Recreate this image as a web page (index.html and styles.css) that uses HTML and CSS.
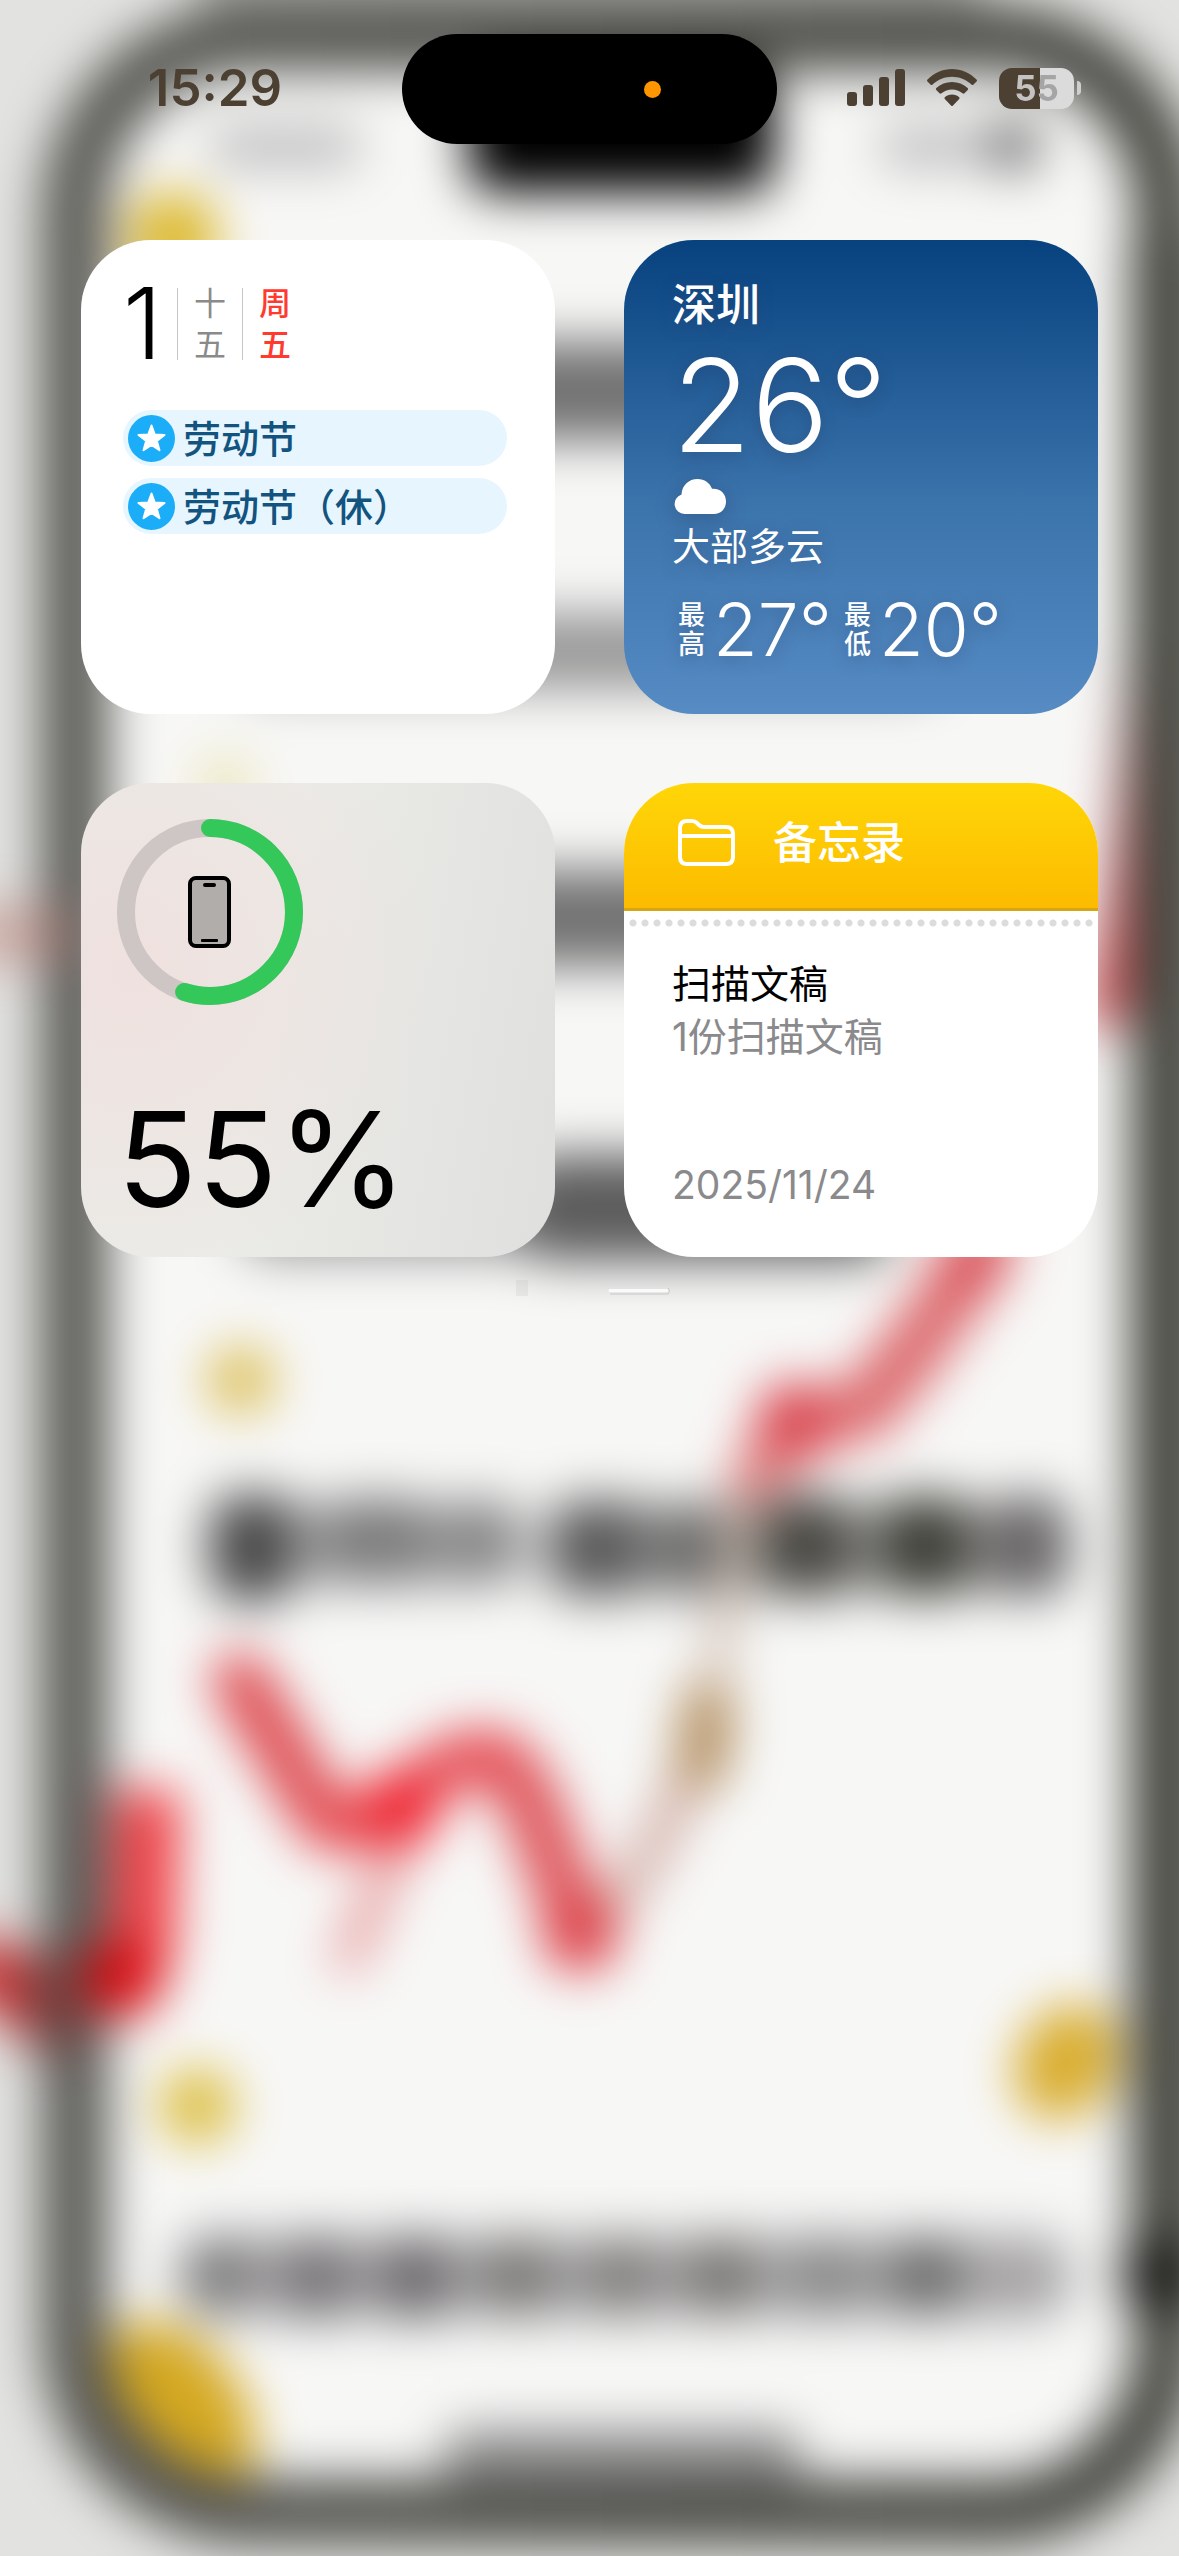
FILE: index.html
```
<!DOCTYPE html>
<html lang="zh-CN">
<head>
	<meta charset="UTF-8" />
	<meta name="viewport" content="width=device-width, initial-scale=1.0" />
	<title>小组件</title>
	<link rel="stylesheet" href="styles.css">
</head>
<body>
<svg class="wallpaper" viewBox="0 0 1179 2556" preserveAspectRatio="none" aria-hidden="true">
	<defs>
		<filter id="soft" x="-200" y="-200" width="1579" height="2956" filterUnits="userSpaceOnUse" color-interpolation-filters="sRGB">
			<feGaussianBlur stdDeviation="25"/>
		</filter>
		<linearGradient id="frame" x1="0" x2="1" y1="0" y2="0">
			<stop offset="0" stop-color="#585854"/>
			<stop offset="0.9" stop-color="#4a4a46"/>
			<stop offset="1" stop-color="#484942"/>
		</linearGradient>
	</defs>
	<g filter="url(#soft)">
		<rect x="-100" y="-100" width="1379" height="2756" fill="#e2e2e0"/>
		<rect x="200" y="-100" width="780" height="140" fill="#a4a4a1"/>
		<rect x="75" y="40" width="1090" height="2472" rx="175" fill="#f7f7f6"/>
		<!-- coins -->
		<circle cx="173" cy="238" r="46" fill="#dcb82c"/>
		<circle cx="225" cy="785" r="30" fill="#ece6bb"/>
		<circle cx="241" cy="1380" r="34" fill="#dcc05a"/>
		<circle cx="197" cy="2106" r="38" fill="#dcbe40"/>
		<ellipse cx="1066" cy="2062" rx="48" ry="60" fill="#d8ac2c" transform="rotate(30 1066 2062)"/>
		<ellipse cx="178" cy="2410" rx="64" ry="98" fill="#d4a820" transform="rotate(-35 178 2410)"/>
		<!-- captions -->
		<g fill="#6e6e6e">
			<rect x="240" y="342" width="730" height="98" rx="30" fill="#727272"/>
			<rect x="240" y="613" width="700" height="76" rx="30" fill="#989898"/>
			<rect x="240" y="870" width="700" height="96" rx="30" fill="#727272"/>
			<rect x="240" y="1170" width="300" height="84" rx="30" fill="#909090"/>
			<rect x="520" y="1155" width="370" height="106" rx="30" fill="#5c5c5c"/>
			<rect x="205" y="1502" width="320" height="84" rx="30" fill="#a4a4a4"/>
			<rect x="545" y="1502" width="525" height="92" rx="30" fill="#9a9a98"/>
			<rect x="212" y="1494" width="80" height="108" rx="26" fill="#484848"/>
			<rect x="322" y="1498" width="110" height="82" rx="30" fill="#7c7c7c"/>
			<rect x="446" y="1500" width="72" height="80" rx="26" fill="#868686"/>
			<rect x="550" y="1500" width="92" height="96" rx="26" fill="#5a5a5a"/>
			<rect x="658" y="1506" width="66" height="88" rx="26" fill="#6a6a6a"/>
			<rect x="762" y="1496" width="90" height="100" rx="26" fill="#484742"/>
			<rect x="880" y="1496" width="90" height="100" rx="26" fill="#40403a"/>
			<rect x="990" y="1496" width="78" height="100" rx="26" fill="#666465"/>
			<rect x="180" y="2236" width="890" height="82" rx="30" fill="#a6a4a5"/>
			<rect x="185" y="2238" width="66" height="74" rx="26" fill="#7c7b7c"/>
			<rect x="284" y="2236" width="66" height="84" rx="26" fill="#747275"/>
			<rect x="382" y="2236" width="66" height="84" rx="26" fill="#6a686b"/>
			<rect x="482" y="2238" width="70" height="76" rx="26" fill="#787876"/>
			<rect x="588" y="2238" width="66" height="76" rx="26" fill="#7e7e7c"/>
			<rect x="688" y="2238" width="66" height="76" rx="26" fill="#747471"/>
			<rect x="794" y="2238" width="66" height="76" rx="26" fill="#888"/>
			<rect x="892" y="2238" width="66" height="76" rx="26" fill="#6a6a6a"/>
			<rect x="210" y="126" width="150" height="40" rx="17" fill="#bbb"/>
			<rect x="880" y="126" width="100" height="40" rx="17" fill="#bbb"/>
			<rect x="985" y="120" width="55" height="50" rx="17" fill="#747474"/>
			<rect x="445" y="2430" width="355" height="60" rx="20" fill="#8c8c8c"/>
		</g>
		<!-- chart line -->
		<g fill="none" stroke-linecap="round" stroke-linejoin="round">
			<path d="M240 1680 320 1812" stroke="#dc4248" stroke-width="54"/>
			<path d="M348 1960 400 1840" stroke="#e48a8c" stroke-width="26"/>
			<path d="M330 1825 400 1815" stroke="#e4464c" stroke-width="54"/>
			<path d="M582 1935Q650 1880 700 1745" stroke="#cda39a" stroke-width="30"/>
			<path d="M500 1760Q530 1790 545 1840L580 1930" stroke="#dc4a50" stroke-width="56"/>
			<path d="M400 1815Q445 1745 500 1758" stroke="#e4444c" stroke-width="52"/>
			<circle cx="400" cy="1808" r="38" fill="#f01c2a"/>
			<circle cx="580" cy="1934" r="38" fill="#dc3c44"/>
			<path d="M702 1765 708 1705" stroke="#b08a5a" stroke-width="50"/>
			<path d="M718 1660 745 1490" stroke="#c9b4a6" stroke-width="24"/>
			<path d="M755 1478 800 1420 870 1410" stroke="#dd7a7a" stroke-width="50"/>
			<path d="M860 1412Q920 1350 985 1240" stroke="#db6468" stroke-width="60"/>
			<circle cx="796" cy="1422" r="40" fill="#d8404a"/>
			<circle cx="972" cy="1262" r="34" fill="#d84c54"/>
			<path d="M1105 1010Q1135 900 1150 640" stroke="#cc4a50" stroke-width="40"/>
		</g>
		<rect x="75" y="38" width="1092" height="2473" rx="175" fill="none" stroke="url(#frame)" stroke-width="66"/>
		<rect x="1130" y="240" width="80" height="2070" fill="#484942"/>
		<circle cx="1158" cy="2275" r="38" fill="#181816"/>
		<path d="M-40 1960 0 1975 56 2030" fill="none" stroke="#c42c2e" stroke-width="60"/>
		<path d="M60 2050V1950" fill="none" stroke="#6a4442" stroke-width="60"/>
		<path d="M120 1985Q147 1970 144 1900L148 1790" fill="none" stroke="#ee3c42" stroke-width="64"/>
		<circle cx="122" cy="1980" r="38" fill="#d8080e"/>
		<path d="M-40 934H75" fill="none" stroke="#b87c72" stroke-width="56" opacity="0.55"/>
		<rect x="468" y="70" width="306" height="122" rx="26" fill="#000"/>
	</g>
	<path d="M610 1290.500H667" fill="none" stroke="#fff" stroke-opacity="0.8" stroke-width="3" stroke-linecap="round"/>
	<path d="M610 1294H668Q671 1291 668 1288" fill="none" stroke="#aaa" stroke-opacity="0.5" stroke-width="1"/>
	<rect x="516" y="1280" width="12" height="16" fill="#aaa" opacity="0.15"/>
</svg>

<header class="status">
	<time class="clock">15:29</time>
	<div class="island"><span class="mic"></span></div>
	<div class="indicators">
		<svg class="signal" viewBox="0 0 58 38" aria-label="信号">
			<rect x="0" y="23" width="10" height="14" rx="3"/>
			<rect x="16" y="16" width="10" height="21" rx="3"/>
			<rect x="32" y="8" width="10" height="29" rx="3"/>
			<rect x="48" y="0" width="10" height="37" rx="3"/>
		</svg>
		<svg class="wifi" viewBox="0 0 50 38" aria-label="无线局域网">
			<path d="M25 0C34 0 43 4 49.500 10.500Q50.500 11.500 49.500 12.500L46.500 15.500Q45.500 16.500 44.500 15.500C39 10.500 32 7.800 25 7.800S11 10.500 5.500 15.500Q4.500 16.500 3.500 15.500L.5 12.500Q-.5 11.500 .5 10.500C7 4 16 0 25 0Z"/>
			<path d="M25 13C31 13 36.500 15.200 40.700 19Q41.700 20 40.700 21L37.500 24.300Q36.500 25.200 35.500 24.300C32.500 21.900 29 20.500 25 20.500S17.500 21.900 14.500 24.300Q13.500 25.200 12.500 24.300L9.300 21Q8.300 20 9.300 19C13.500 15.200 19 13 25 13Z"/>
			<path d="M25 25.500C28 25.500 30.300 26.500 32.200 28.200Q33 29 32.200 30L26 36.500Q25 37.500 24 36.500L17.800 30Q17 29 17.800 28.200C19.700 26.500 22 25.500 25 25.500Z"/>
		</svg>
		<div class="power">
			<div class="cell"><span class="level">55</span></div>
			<span class="nub"></span>
		</div>
	</div>
</header>

<main class="widgets">
	<section class="widget calendar">
		<div class="date">
			<span class="day">1</span>
			<span class="lunar">十<br>五</span>
			<span class="weekday">周<br>五</span>
		</div>
		<ul class="events">
			<li class="event">
				<svg class="star" viewBox="0 0 47 47" aria-hidden="true">
					<circle cx="23.500" cy="23.500" r="23.500" fill="#1badf8"/>
					<path d="M23.500 10.500 26.800 19.600 36.500 19.900 28.800 25.900 31.500 35.200 23.500 29.800 15.500 35.200 18.200 25.900 10.500 19.900 20.200 19.600Z" fill="#fff" stroke="#fff" stroke-width="2" stroke-linejoin="round"/>
				</svg>
				<span class="event-name">劳动节</span>
			</li>
			<li class="event">
				<svg class="star" viewBox="0 0 47 47" aria-hidden="true">
					<circle cx="23.500" cy="23.500" r="23.500" fill="#1badf8"/>
					<path d="M23.500 10.500 26.800 19.600 36.500 19.900 28.800 25.900 31.500 35.200 23.500 29.800 15.500 35.200 18.200 25.900 10.500 19.900 20.200 19.600Z" fill="#fff" stroke="#fff" stroke-width="2" stroke-linejoin="round"/>
				</svg>
				<span class="event-name">劳动节（休）</span>
			</li>
		</ul>
	</section>

	<section class="widget weather">
		<h2 class="city">深圳</h2>
		<div class="temp">26°</div>
		<svg class="cloud" viewBox="0 0 52 35" aria-hidden="true">
			<path d="M10.500 35A10 10 0 0 1 7.500 15.500C8 6 15 0 23.500 0 30.500 0 36 4 38 9.800 46 9 52 14.500 52 22.500 52 29.500 47 35 40 35Z"/>
		</svg>
		<div class="condition">大部多云</div>
		<div class="range">
			<span class="range-label">最<br>高</span>
			<span class="range-value">27°</span>
			<span class="range-label">最<br>低</span>
			<span class="range-value">20°</span>
		</div>
	</section>

	<section class="widget battery">
		<svg class="ring" viewBox="0 0 186 186" role="img" aria-label="iPhone">
			<circle cx="93" cy="93" r="84" fill="none" stroke="#cdc6c4" stroke-width="18"/>
			<circle cx="93" cy="93" r="84" fill="none" stroke="#34c759" stroke-width="18" stroke-linecap="round" pathLength="100" stroke-dasharray="55 100" transform="rotate(-90 93 93)"/>
			<rect x="73" y="59" width="39" height="68" rx="6" fill="#b1adab" stroke="#000" stroke-width="4"/>
			<rect x="86" y="64" width="13" height="4" rx="2"/>
			<rect x="84" y="120" width="17" height="3" rx="1"/>
		</svg>
		<div class="percent">55%</div>
	</section>

	<section class="widget notes">
		<header class="notes-head">
			<svg class="folder" viewBox="0 0 57 47" aria-hidden="true">
				<path d="M2 9Q2 2 9 2H14Q17 2 19 4L21 6Q23 8 26 8H48Q55 8 55 15V38Q55 45 48 45H9Q2 45 2 38ZM2 17H55"/>
			</svg>
			<h2 class="notes-title">备忘录</h2>
		</header>
		<div class="perforation"></div>
		<div class="note">
			<h3 class="note-title">扫描文稿</h3>
			<p class="note-text">1份扫描文稿</p>
			<time class="note-date">2025/11/24</time>
		</div>
	</section>
</main>
</body>
</html>
```
FILE: styles.css
```
* {
	margin: 0;
	padding: 0;
	box-sizing: border-box;
}
body {
	position: relative;
	min-height: 100vh;
	overflow-x: hidden;
	font-family: Inter, "Noto Sans CJK SC", sans-serif;
	background: #e2e2e0;
}
h2, h3 {
	font-weight: 500;
}
.wallpaper {
	position: absolute;
	inset: 0;
	width: 100%;
	height: 100%;
	z-index: -1;
}

/* status bar */
.status {
	display: grid;
	grid-template-columns: 1fr 375px 1fr;
	padding-top: 34px;
	color: #4c4033;
}
.clock {
	padding-left: 28px;
	justify-self: center;
	font-size: 51px;
	font-weight: 600;
	line-height: 108px;
}
.island {
	display: flex;
	align-items: center;
	justify-content: flex-end;
	height: 110px;
	padding-right: 116px;
	border-radius: 55px;
	background: #000;
}
.mic {
	width: 17px;
	height: 17px;
	border-radius: 50%;
	background: #ff9500;
}
.indicators {
	display: flex;
	align-items: center;
	justify-content: flex-end;
	gap: 22px;
	height: 108px;
	padding-right: 98px;
}
.signal {
	width: 58px;
	height: 38px;
	fill: #4c4033;
}
.wifi {
	width: 50px;
	height: 38px;
	fill: #4c4033;
}
.power {
	display: flex;
	align-items: center;
	gap: 3px;
}
.cell {
	width: 75px;
	height: 41px;
	border-radius: 13px;
	text-align: center;
	background: linear-gradient(to right, #4c4033 55%, #dbdbdb 55%);
}
.level {
	display: block;
	font-size: 35px;
	font-weight: 700;
	line-height: 41px;
	color: transparent;
	background: linear-gradient(to right, #c4c3c2 55%, #a5a5a5 55%);
	background-clip: text;
	-webkit-background-clip: text;
}
.nub {
	width: 4px;
	height: 14px;
	border-radius: 0 4px 4px 0;
	background: #cfcfcf;
}

/* widget grid */
.widgets {
	display: grid;
	grid-template-columns: 1fr 1fr;
	gap: 69px;
	padding: 96px 81px 81px;
}
.widget {
	aspect-ratio: 1;
	border-radius: 70px;
	overflow: hidden;
}

.calendar {
	padding: 42px;
	background: #fff;
}
.date {
	display: flex;
	align-items: center;
	height: 83px;
}
.day {
	width: 54px;
	font-size: 99px;
	font-weight: 300;
	line-height: 83px;
}
.lunar, .weekday {
	width: 65px;
	height: 72px;
	border-left: 1px solid #c6c6c6;
	display: flex;
	align-items: center;
	justify-content: center;
	font-size: 32px;
	line-height: 41px;
	color: #8a8a8a;
}
.weekday {
	font-weight: 500;
	color: #ff3b30;
}
.events {
	display: flex;
	flex-direction: column;
	gap: 12px;
	margin-top: 45px;
	padding-right: 6px;
	list-style: none;
}
.event {
	display: flex;
	align-items: center;
	gap: 8px;
	height: 56px;
	padding-left: 5px;
	border-radius: 28px;
	background: #e7f6fe;
	color: #12547f;
	font-size: 38px;
	font-weight: 500;
}
.event-name {
	padding-bottom: 4px;
}
.star {
	width: 47px;
	height: 47px;
}

.weather {
	padding: 39px 48px;
	background: linear-gradient(#07427f, #3b73ab 55%, #568bc4);
	color: #fff;
	text-shadow: 0 4px 16px rgba(40, 60, 100, 0.4);
}
.city {
	font-size: 44px;
	line-height: 52px;
}
.temp {
	font-size: 129px;
	font-weight: 300;
	line-height: 148px;
}
.cloud {
	display: block;
	width: 56px;
	height: 35px;
	fill: #fff;
	filter: drop-shadow(0 4px 10px rgba(40, 60, 100, 0.4));
}
.condition {
	margin-top: 6px;
	font-size: 38px;
	line-height: 52px;
}
.range {
	display: flex;
	align-items: center;
	margin-top: 28px;
	padding-left: 6px;
}
.range-label {
	font-size: 27px;
	font-weight: 500;
	line-height: 29px;
}
.range-value {
	margin: 0 12px 0 8px;
	font-size: 73px;
	font-weight: 300;
	line-height: 60px;
}

.battery {
	display: flex;
	flex-direction: column;
	justify-content: space-between;
	padding: 36px;
	background:
		radial-gradient(circle at 10% 40%, rgba(240, 222, 220, 0.8), rgba(240, 228, 226, 0) 60%),
		linear-gradient(100deg, #ebebe7 40%, #dfdfde);
}
.ring {
	width: 186px;
	height: 186px;
}
.percent {
	font-size: 132px;
	line-height: 124px;
}

.notes {
	display: flex;
	flex-direction: column;
	background: #fff;
}
.notes-head {
	display: flex;
	align-items: center;
	gap: 38px;
	height: 128px;
	padding: 0 54px 6px;
	border-bottom: 3px solid #d8a614;
	background: linear-gradient(#ffd608, #fcbb00);
	color: #fff;
}
.folder {
	width: 57px;
	height: 47px;
	fill: none;
	stroke: #fff;
	stroke-width: 4;
}
.notes-title {
	font-size: 44px;
	line-height: 52px;
}
.perforation {
	height: 24px;
	margin: 0 3px;
	background: radial-gradient(circle, #dcdcdc 3px, transparent 4px) 0 0 / 12px 24px;
}
.note {
	flex: 1;
	display: flex;
	flex-direction: column;
	padding: 22px 48px 46px;
	font-size: 39px;
	line-height: 53px;
	color: #8a8a8d;
}
.note-title {
	font-size: 39px;
	font-weight: 400;
	color: #000;
}
.note-date {
	margin-top: auto;
}
```
